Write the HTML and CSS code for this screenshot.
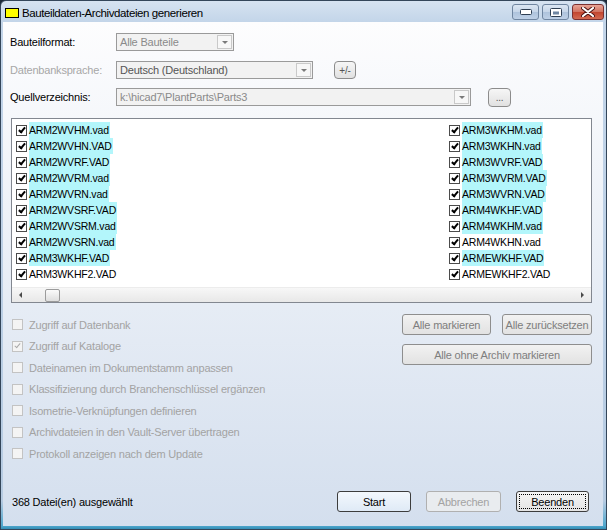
FILE: index.html
```html
<!DOCTYPE html>
<html lang="de">
  <head>
    <meta charset="UTF-8" />
    <meta name="viewport" content="width=device-width, initial-scale=1.0" />
    <title>Bauteildaten-Archivdateien generieren</title>
    <link rel="stylesheet" href="styles.css">
  </head>
  <body>
    <div class="window">
      <div class="titlebar">
        <span class="app-icon"></span>
        <span class="title">Bauteildaten-Archivdateien generieren</span>
        <div class="caption-buttons">
          <span class="cap">
            <svg width="12" height="6" viewBox="0 0 12 6"><rect x="0.5" y="0.5" width="11" height="5" rx="1" fill="#fff" stroke="#2e3e52"/></svg>
          </span>
          <span class="cap">
            <svg width="12" height="9" viewBox="0 0 12 9"><rect x="0.5" y="0.5" width="11" height="8" rx="1" fill="#fff" stroke="#2e3e52"/><rect x="3" y="3.5" width="6" height="3" fill="#6f86a2"/></svg>
          </span>
          <span class="cap close">
            <svg width="14" height="10" viewBox="0 0 14 10"><path d="M2 1 L12 9 M12 1 L2 9" stroke="#4a1212" stroke-width="4" stroke-linecap="round"/><path d="M2 1 L12 9 M12 1 L2 9" stroke="#fff" stroke-width="2.2" stroke-linecap="round"/></svg>
          </span>
        </div>
      </div>

      <div class="client">
        <div class="field row-format">
          <span class="field-label">Bauteilformat:</span>
          <div class="combo combo-format">
            <span class="combo-text">Alle Bauteile</span>
            <span class="combo-arrow"></span>
          </div>
        </div>
        <div class="field row-lang">
          <span class="field-label disabled">Datenbanksprache:</span>
          <div class="combo combo-lang">
            <span class="combo-text dark">Deutsch (Deutschland)</span>
            <span class="combo-arrow"></span>
          </div>
          <button class="small-btn btn-lang">+/-</button>
        </div>
        <div class="field row-source">
          <span class="field-label">Quellverzeichnis:</span>
          <div class="combo combo-source">
            <span class="combo-text">k:\hicad7\PlantParts\Parts3</span>
            <span class="combo-arrow"></span>
          </div>
          <button class="small-btn btn-browse">...</button>
        </div>

        <div class="listbox">
          <div class="list-items">
            <div class="list-col">
              <div class="item"><span class="cb checked"></span><span class="name hl">ARM2WVHM.vad</span></div>
              <div class="item"><span class="cb checked"></span><span class="name hl">ARM2WVHN.VAD</span></div>
              <div class="item"><span class="cb checked"></span><span class="name hl">ARM2WVRF.VAD</span></div>
              <div class="item"><span class="cb checked"></span><span class="name hl">ARM2WVRM.vad</span></div>
              <div class="item"><span class="cb checked"></span><span class="name hl">ARM2WVRN.vad</span></div>
              <div class="item"><span class="cb checked"></span><span class="name hl">ARM2WVSRF.VAD</span></div>
              <div class="item"><span class="cb checked"></span><span class="name hl">ARM2WVSRM.vad</span></div>
              <div class="item"><span class="cb checked"></span><span class="name hl">ARM2WVSRN.vad</span></div>
              <div class="item"><span class="cb checked"></span><span class="name hl">ARM3WKHF.VAD</span></div>
              <div class="item"><span class="cb checked"></span><span class="name">ARM3WKHF2.VAD</span></div>
            </div>
            <div class="list-col">
              <div class="item"><span class="cb checked"></span><span class="name hl">ARM3WKHM.vad</span></div>
              <div class="item"><span class="cb checked"></span><span class="name hl">ARM3WKHN.vad</span></div>
              <div class="item"><span class="cb checked"></span><span class="name hl">ARM3WVRF.VAD</span></div>
              <div class="item"><span class="cb checked"></span><span class="name hl">ARM3WVRM.VAD</span></div>
              <div class="item"><span class="cb checked"></span><span class="name hl">ARM3WVRN.VAD</span></div>
              <div class="item"><span class="cb checked"></span><span class="name hl">ARM4WKHF.VAD</span></div>
              <div class="item"><span class="cb checked"></span><span class="name hl">ARM4WKHM.vad</span></div>
              <div class="item"><span class="cb checked"></span><span class="name">ARM4WKHN.vad</span></div>
              <div class="item"><span class="cb checked"></span><span class="name hl">ARMEWKHF.VAD</span></div>
              <div class="item"><span class="cb checked"></span><span class="name">ARMEWKHF2.VAD</span></div>
            </div>
          </div>
          <div class="hscroll">
            <span class="arrow-left"></span>
            <span class="thumb"></span>
            <span class="arrow-right"></span>
          </div>
        </div>

        <div class="options">
          <div class="option-list">
            <div class="option"><span class="cb off"></span>Zugriff auf Datenbank</div>
            <div class="option"><span class="cb off checked"></span>Zugriff auf Kataloge</div>
            <div class="option"><span class="cb off"></span>Dateinamen im Dokumentstamm anpassen</div>
            <div class="option"><span class="cb off"></span>Klassifizierung durch Branchenschlüssel ergänzen</div>
            <div class="option"><span class="cb off"></span>Isometrie-Verknüpfungen definieren</div>
            <div class="option"><span class="cb off"></span>Archivdateien in den Vault-Server übertragen</div>
            <div class="option"><span class="cb off"></span>Protokoll anzeigen nach dem Update</div>
          </div>
          <div class="option-buttons">
            <button class="btn btn-muted">Alle markieren</button>
            <button class="btn btn-muted">Alle zurücksetzen</button>
            <button class="btn btn-muted btn-wide">Alle ohne Archiv markieren</button>
          </div>
        </div>

        <div class="footer">
          <span class="status">368 Datei(en) ausgewählt</span>
          <button class="btn btn-start">Start</button>
          <button class="btn btn-disabled">Abbrechen</button>
          <button class="btn btn-focus">Beenden</button>
        </div>
      </div>
    </div>
  </body>
</html>
```

FILE: styles.css
```css
body {
  margin: 0;
  background: #1c2a3a;
  font-family: "Liberation Sans", Arial, sans-serif;
  font-size: 11px;
  letter-spacing: -0.2px;
  color: #000;
}
button {
  font: inherit;
  letter-spacing: inherit;
  padding: 0;
  margin: 0;
  white-space: nowrap;
}
.window {
  width: 607px;
  height: 530px;
  box-sizing: border-box;
  display: flex;
  flex-direction: column;
  border: 1px solid #34465a;
  border-radius: 6px 6px 0 0;
  padding: 0 3px 3px 2px;
  background: linear-gradient(#d6e3f1 0, #c3d5e9 21px, #b6cbe2 500px, #4ea6cc 525px, #2a86ae 529px);
}

/* title bar */
.titlebar {
  height: 21px;
  display: flex;
  align-items: center;
  padding-left: 2px;
  padding-top: 2px;
  box-sizing: border-box;
}
.app-icon {
  width: 12px;
  height: 8px;
  border: 1px solid #000;
  background: #ffff00;
  margin-right: 3px;
}
.title {
  color: #000;
  font-size: 11.5px;
  letter-spacing: -0.4px;
}
.caption-buttons {
  margin-left: auto;
  margin-right: -1px;
  align-self: flex-start;
  margin-top: 1px;
  display: flex;
  gap: 3px;
}
.cap {
  width: 27px;
  height: 16px;
  box-sizing: border-box;
  border: 1px solid #6f85a0;
  border-radius: 3px;
  background: linear-gradient(#dbe6f3 0, #c5d5e8 50%, #aec3dc 51%, #bed0e6);
  display: flex;
  align-items: center;
  justify-content: center;
}
.cap.close {
  width: 32px;
  border-color: #7a3030;
  background: linear-gradient(#e8a496 0, #d0715f 50%, #c2452f 51%, #d36a52);
}

/* client area */
.client {
  flex: 1;
  display: flex;
  flex-direction: column;
  background: linear-gradient(#fdfdfe, #d4dfee);
}
.field {
  display: flex;
  align-items: center;
  height: 18px;
  padding-left: 7px;
}
.row-format {
  margin-top: 11px;
}
.row-lang {
  margin-top: 10px;
}
.row-source {
  margin-top: 9px;
}
.field-label {
  width: 106px;
}
.disabled {
  color: #a7a7a7;
}
.combo {
  box-sizing: border-box;
  height: 18px;
  border: 1px solid #9a9a9a;
  background: #f2f2f2;
  display: flex;
  align-items: center;
  padding-left: 3px;
  color: #8a8a8a;
}
.combo-format {
  width: 118px;
}
.combo-lang {
  width: 197px;
}
.combo-source {
  width: 355px;
}
.combo-text {
  flex: 1;
  white-space: nowrap;
}
.combo-text.dark {
  color: #555;
}
.combo-arrow {
  width: 15px;
  height: 14px;
  margin-right: 1px;
  box-sizing: border-box;
  border: 1px solid #c9c9c9;
  background: #f7f7f7;
  display: flex;
  align-items: center;
  justify-content: center;
}
.combo-arrow::before {
  content: "";
  border-left: 3px solid transparent;
  border-right: 3px solid transparent;
  border-top: 3px solid #7a7a7a;
}
.small-btn {
  box-sizing: border-box;
  border: 1px solid #8c8c8c;
  border-radius: 4px;
  background: linear-gradient(#f6f6f6, #e1e1e1);
  color: #555;
  font-size: 10px;
}
.btn-lang {
  width: 22px;
  height: 18px;
  margin-left: 21px;
}
.btn-browse {
  width: 23px;
  height: 19px;
  margin-left: 17px;
}

/* file list */
.listbox {
  margin: 12px 11px 0 8px;
  height: 185px;
  box-sizing: border-box;
  border: 1px solid #828790;
  background: #fff;
  display: flex;
  flex-direction: column;
}
.list-items {
  flex: 1;
  display: flex;
  padding: 3px 0 0 4px;
}
.list-col:first-child {
  width: 433px;
}
.item {
  height: 16px;
  display: flex;
  align-items: center;
}
.name {
  line-height: 16px;
  padding-right: 1px;
  font-size: 10.5px;
}
.name.hl {
  background: #b3f6fb;
}
.cb {
  width: 11px;
  height: 11px;
  box-sizing: border-box;
  border: 1px solid #4b4b4b;
  background: #fff;
  margin-right: 2px;
  display: flex;
  align-items: center;
  justify-content: center;
  flex-shrink: 0;
}
.cb.checked::after {
  content: "";
  width: 2px;
  height: 5px;
  border: solid #000;
  border-width: 0 2px 2px 0;
  transform: rotate(40deg);
  margin-top: -2px;
}
.cb.off {
  border-color: #c3c3c3;
  background: #f4f4f4;
  margin-right: 6px;
}
.cb.off.checked::after {
  border-color: #a9a9a9;
  border-width: 0 1px 1px 0;
}
.hscroll {
  height: 15px;
  display: flex;
  align-items: center;
  background: linear-gradient(#f7f7f7, #e8e8e8);
  border-top: 1px solid #ececec;
  box-sizing: border-box;
}
.arrow-left,
.arrow-right {
  width: 17px;
  height: 13px;
  display: flex;
  align-items: center;
  justify-content: center;
}
.arrow-left::before {
  content: "";
  border-top: 3px solid transparent;
  border-bottom: 3px solid transparent;
  border-right: 3px solid #4a4a4a;
}
.arrow-right::before {
  content: "";
  border-top: 3px solid transparent;
  border-bottom: 3px solid transparent;
  border-left: 3px solid #4a4a4a;
}
.arrow-right {
  margin-left: auto;
}
.thumb {
  width: 15px;
  height: 13px;
  margin-left: 16px;
  box-sizing: border-box;
  border: 1px solid #9b9b9b;
  border-radius: 2px;
  background: linear-gradient(#fbfbfb, #dedede);
}

/* options */
.options {
  display: flex;
  margin: 11px 11px 0 9px;
}
.option-list {
  flex: 1;
}
.option {
  height: 21.5px;
  display: flex;
  align-items: center;
  color: #a3a3a3;
}
.option-buttons {
  width: 190px;
  display: grid;
  grid-template-columns: 89px 90px;
  gap: 9px 11px;
  align-content: start;
}
.btn {
  box-sizing: border-box;
  height: 21px;
  border: 1px solid #707070;
  border-radius: 3px;
  background: linear-gradient(#f4f4f4 0, #ececec 50%, #dfdfdf 51%, #d3d3d3);
  color: #000;
}
.btn-muted {
  border-color: #8e8e8e;
  color: #7e7e7e;
  background: linear-gradient(#f2f2f2, #e2e2e2);
}
.btn-wide {
  grid-column: 1 / 3;
}

/* footer */
.footer {
  margin: auto 14px 14px 9px;
  height: 21px;
  display: flex;
  align-items: center;
}
.status {
  flex: 1;
}
.btn-start {
  width: 74px;
  border-color: #3d3d3d;
  background: linear-gradient(#f3f8fd, #dfeaf6);
}
.btn-disabled {
  width: 75px;
  margin-left: 15px;
  border-color: #b0b0b0;
  color: #a3a3a3;
  background: #e9ecef;
}
.btn-focus {
  width: 73px;
  margin-left: 15px;
  border-color: #3d3d3d;
  background: linear-gradient(#f5f5f5, #e4e4e4);
  outline: 1px dotted #000;
  outline-offset: -4px;
}
```
